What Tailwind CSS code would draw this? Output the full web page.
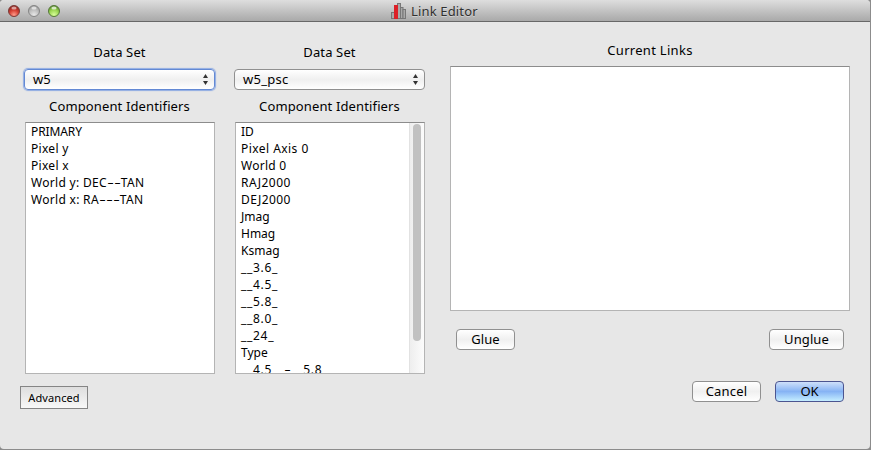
<!DOCTYPE html>
<html lang="en">
<head>
<meta charset="utf-8">
<title>Link Editor</title>
<script src="https://cdn.jsdelivr.net/npm/@tailwindcss/browser@4"></script>
</head>
<body class="w-[871px] h-[450px] overflow-hidden bg-[#8c8c8c] font-['Noto_Sans','Open_Sans',sans-serif] text-[13px] leading-[17px] text-black">
<div class="w-[870px] h-[449px] rounded-t-[4px] rounded-b-[4px] overflow-hidden bg-[#e7e7e7] flex flex-col">
  <header class="h-[22px] shrink-0 border-b border-[#686868] bg-linear-to-b from-[#dedede] to-[#a9a9a9] flex items-center">
    <div class="flex gap-2 pl-2 pt-px">
      <svg class="size-3" viewBox="0 0 12 12"><defs><radialGradient id="r" cx=".5" cy=".85" r=".8"><stop offset="0" stop-color="#ff9d8c"/><stop offset=".5" stop-color="#d94538"/><stop offset="1" stop-color="#8c1f1a"/></radialGradient></defs><circle cx="6" cy="6" r="5.5" fill="url(#r)" stroke="#7b3d3a"/><ellipse cx="6" cy="3" rx="2.6" ry="1.5" fill="#fff" opacity=".55"/></svg>
      <svg class="size-3" viewBox="0 0 12 12"><defs><radialGradient id="g" cx=".5" cy=".85" r=".8"><stop offset="0" stop-color="#e8e8e8"/><stop offset=".6" stop-color="#bcbcbc"/><stop offset="1" stop-color="#999"/></radialGradient></defs><circle cx="6" cy="6" r="5.5" fill="url(#g)" stroke="#858585"/><ellipse cx="6" cy="3" rx="2.6" ry="1.5" fill="#fff" opacity=".6"/></svg>
      <svg class="size-3" viewBox="0 0 12 12"><defs><radialGradient id="v" cx=".5" cy=".85" r=".8"><stop offset="0" stop-color="#d9ff9a"/><stop offset=".6" stop-color="#98d34e"/><stop offset="1" stop-color="#568b2a"/></radialGradient></defs><circle cx="6" cy="6" r="5.5" fill="url(#v)" stroke="#56783c"/><ellipse cx="6" cy="3" rx="2.6" ry="1.5" fill="#fff" opacity=".7"/></svg>
    </div>
    <div class="flex items-center ml-[331px] gap-1 pt-px">
      <svg class="w-4 h-4" viewBox="0 0 16 16"><g fill="#a9a9a9" stroke="#777"><rect x=".5" y="9.5" width="3" height="6"/><rect x="6.5" y=".5" width="3" height="15"/><rect x="9.500" y="4.500" width="2.500" height="11"/><rect x="12" y="6.500" width="2.500" height="9"/></g><rect x="3" y="2" width="4" height="14" fill="#dc2027"/></svg>
      <h1 class="tracking-[.15px] text-[#303030] [text-shadow:0_1px_0_rgba(255,255,255,.4)]">Link Editor</h1>
    </div>
  </header>

  <main class="grow flex pl-5">
    <section class="w-[430px] flex flex-col items-start">
      <div class="flex gap-[19px] pl-1 pt-[22px]">
        <div class="w-[191px] flex flex-col">
          <div class="text-center tracking-[.13px]">Data Set</div>
          <div class="mt-2 h-[21px] rounded-[4px] border border-[#6389d4] shadow-[0_0_1px_1px_#8eabe3] bg-linear-to-b from-white via-[#f0f0f0] to-white flex items-center justify-between pl-2 pr-1.5"><span>w5</span><svg class="w-[5px] h-[11px]" viewBox="0 0 5 11"><path d="M0 4 2.500 0 5 4ZM0 7H5L2.500 11Z" fill="#333"/></svg></div>
          <div class="mt-2 text-center tracking-[.13px]">Component Identifiers</div>
          <ul class="mt-[7px] ml-px h-[252px] border border-[#b4b4b4] border-t-[#8c8c8c] bg-white overflow-hidden pl-[5px] text-[12px] whitespace-nowrap tracking-[.3px]">
            <li class="tracking-[-.1px]">PRIMARY</li>
            <li>Pixel y</li>
            <li>Pixel x</li>
            <li>World y: DEC<span class="inline-block w-[7px] scale-x-[1.7] text-center tracking-normal">-</span><span class="inline-block w-[7px] scale-x-[1.7] text-center tracking-normal">-</span>TAN</li>
            <li>World x: RA<span class="inline-block w-[7px] scale-x-[1.7] text-center tracking-normal">-</span><span class="inline-block w-[7px] scale-x-[1.7] text-center tracking-normal">-</span><span class="inline-block w-[7px] scale-x-[1.7] text-center tracking-normal">-</span>TAN</li>
          </ul>
        </div>
        <div class="w-[191px] flex flex-col">
          <div class="text-center tracking-[.13px]">Data Set</div>
          <div class="mt-2 h-[21px] rounded-[4px] border border-[#909090] bg-linear-to-b from-white via-[#f0f0f0] to-white flex items-center justify-between pl-2 pr-1.5"><span class="tracking-[.25px]">w5_psc</span><svg class="w-[5px] h-[11px]" viewBox="0 0 5 11"><path d="M0 4 2.500 0 5 4ZM0 7H5L2.500 11Z" fill="#333"/></svg></div>
          <div class="mt-2 text-center tracking-[.13px]">Component Identifiers</div>
          <div class="mt-[7px] ml-px h-[252px] border border-[#b4b4b4] border-t-[#8c8c8c] bg-white overflow-hidden pl-[5px] flex justify-between text-[12px] whitespace-nowrap">
            <ul>
              <li>ID</li>
              <li class="tracking-[.45px]">Pixel Axis 0</li>
              <li class="tracking-[.25px]">World 0</li>
              <li class="tracking-[.5px]">RAJ2000</li>
              <li class="tracking-[.4px]">DEJ2000</li>
              <li>Jmag</li>
              <li>Hmag</li>
              <li>Ksmag</li>
              <li class="tracking-[.7px]">__3.6_</li>
              <li class="tracking-[.7px]">__4.5_</li>
              <li class="tracking-[.7px]">__5.8_</li>
              <li class="tracking-[.7px]">__8.0_</li>
              <li class="tracking-[.7px]">__24_</li>
              <li>Type</li>
              <li class="tracking-[.7px]">__4.5__<span class="inline-block w-[7px] scale-x-[1.7] text-center tracking-normal">-</span>__5.8__</li>
            </ul>
            <div class="w-[15px] h-[250px] border-l border-[#e2e2e2] bg-linear-to-r from-[#eeeeee] to-[#fcfcfc] pl-[3px] pt-px"><div class="w-2 h-[217px] rounded-full bg-[#c1c1c1]"></div></div>
          </div>
        </div>
      </div>
      <button class="mt-3 w-[68px] h-[23px] border border-[#858585] bg-linear-to-b from-[#dedede] to-[#f8f8f8] text-[11px] tracking-[.1px]">Advanced</button>
    </section>

    <section class="w-[400px] flex flex-col pt-5">
      <div class="text-center tracking-[.3px]">Current Links</div>
      <div class="mt-[7px] h-[245px] border border-[#b4b4b4] border-t-[#8c8c8c] bg-white"></div>
      <div class="mt-[18px] px-1.5 flex justify-between">
        <button class="w-[59px] h-[21px] rounded-[4px] border border-[#909090] bg-linear-to-b from-white via-[#f0f0f0] to-white tracking-[.1px]">Glue</button>
        <button class="w-[75px] h-[21px] rounded-[4px] border border-[#909090] bg-linear-to-b from-white via-[#f0f0f0] to-white tracking-[.1px]">Unglue</button>
      </div>
      <div class="mt-[31px] pr-1.5 flex justify-end gap-3.5">
        <button class="w-[69px] h-[21px] rounded-[4px] border border-[#909090] bg-linear-to-b from-white via-[#f0f0f0] to-white tracking-[.2px]">Cancel</button>
        <button class="w-[69px] h-[21px] rounded-[4px] border border-[#4c5590] bg-linear-to-b from-[#cfe0fa] via-[#86b3f4] to-[#c5eeff]">OK</button>
      </div>
    </section>
  </main>
</div>
</body>
</html>
